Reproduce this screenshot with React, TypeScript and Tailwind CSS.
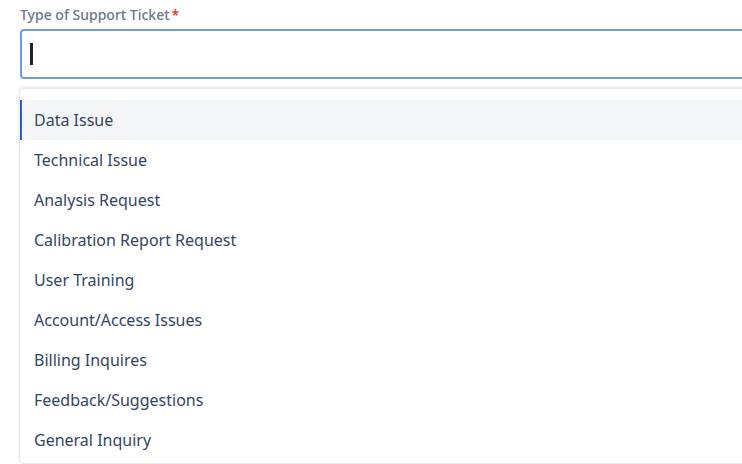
export default function App() {
  const items = [
    "Data Issue",
    "Technical Issue",
    "Analysis Request",
    "Calibration Report Request",
    "User Training",
    "Account/Access Issues",
    "Billing Inquires",
    "Feedback/Suggestions",
    "General Inquiry",
  ];
  return (
    <div className="w-[742px] h-[464px] overflow-hidden bg-white" style={{ fontFamily: '"Noto Sans", "Open Sans", sans-serif' }}>
      <div className="pl-[20px] pt-[4px] w-[780px]">
        <div className="flex items-center h-[20px] text-[14px] font-medium text-[#6b778c]">
          Type of Support Ticket<span className="ml-[2px] text-[#de350b]">*</span>
        </div>
        <div className="mt-[5px] h-[50px] rounded-[4px] border-2 border-[#6b9cf3] flex items-center pl-[8px]">
          <div className="w-[2.5px] h-[22px] bg-[#222]" />
        </div>
        <div className="mt-[9px] rounded-[4px] border-t border-[#e6e6e6] shadow-[0_0_3px_rgba(9,30,66,0.25)] pt-[11px] pb-[3px]">
          {items.map((it, i) => (
            <div
              key={it}
              className={
                i === 0
                  ? "h-[40px] flex items-center pl-[12px] text-[16px] text-[#344563] bg-[#f4f5f7] border-l-2 border-[#2f5bd3]"
                  : "h-[40px] flex items-center pl-[14px] text-[16px] text-[#344563]"
              }
            >
              {it}
            </div>
          ))}
        </div>
      </div>
    </div>
  );
}
